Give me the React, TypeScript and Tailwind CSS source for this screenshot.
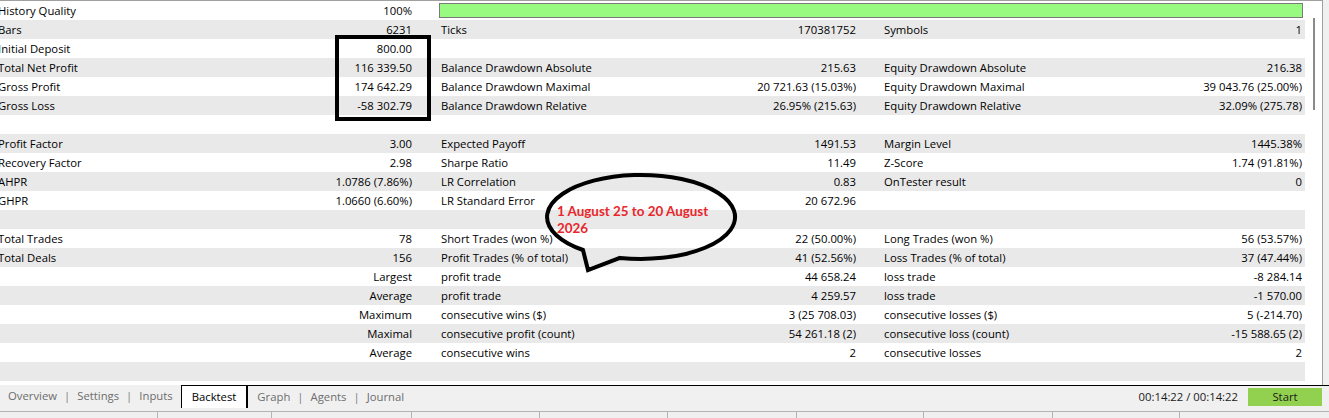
import React from "react";

type Cell = [string, string];
type Row = { cells: [Cell, Cell, Cell] } | { quality: true } | { empty: true };

const E: Cell = ["", ""];

const ROWS: Row[] = [
  { quality: true },
  { cells: [["Bars", "6231"], ["Ticks", "170381752"], ["Symbols", "1"]] },
  { cells: [["Initial Deposit", "800.00"], E, E] },
  { cells: [["Total Net Profit", "116 339.50"], ["Balance Drawdown Absolute", "215.63"], ["Equity Drawdown Absolute", "216.38"]] },
  { cells: [["Gross Profit", "174 642.29"], ["Balance Drawdown Maximal", "20 721.63 (15.03%)"], ["Equity Drawdown Maximal", "39 043.76 (25.00%)"]] },
  { cells: [["Gross Loss", "-58 302.79"], ["Balance Drawdown Relative", "26.95% (215.63)"], ["Equity Drawdown Relative", "32.09% (275.78)"]] },
  { empty: true },
  { cells: [["Profit Factor", "3.00"], ["Expected Payoff", "1491.53"], ["Margin Level", "1445.38%"]] },
  { cells: [["Recovery Factor", "2.98"], ["Sharpe Ratio", "11.49"], ["Z-Score", "1.74 (91.81%)"]] },
  { cells: [["AHPR", "1.0786 (7.86%)"], ["LR Correlation", "0.83"], ["OnTester result", "0"]] },
  { cells: [["GHPR", "1.0660 (6.60%)"], ["LR Standard Error", "20 672.96"], E] },
  { empty: true },
  { cells: [["Total Trades", "78"], ["Short Trades (won %)", "22 (50.00%)"], ["Long Trades (won %)", "56 (53.57%)"]] },
  { cells: [["Total Deals", "156"], ["Profit Trades (% of total)", "41 (52.56%)"], ["Loss Trades (% of total)", "37 (47.44%)"]] },
  { cells: [["", "Largest"], ["profit trade", "44 658.24"], ["loss trade", "-8 284.14"]] },
  { cells: [["", "Average"], ["profit trade", "4 259.57"], ["loss trade", "-1 570.00"]] },
  { cells: [["", "Maximum"], ["consecutive wins ($)", "3 (25 708.03)"], ["consecutive losses ($)", "5 (-214.70)"]] },
  { cells: [["", "Maximal"], ["consecutive profit (count)", "54 261.18 (2)"], ["consecutive loss (count)", "-15 588.65 (2)"]] },
  { cells: [["", "Average"], ["consecutive wins", "2"], ["consecutive losses", "2"]] },
  { empty: true },
];

const TABS = ["Overview", "Settings", "Inputs", "Backtest", "Graph", "Agents", "Journal"];
const STATUS_DIVIDERS = [158, 272, 412, 540, 668, 797, 924, 1053, 1180];

function StatCell({ cell, pad, first }: { cell: Cell; pad: string; first?: boolean }) {
  return (
    <div className={`flex items-center justify-between pt-[1px] ${pad}`}>
      <span className={first ? "-ml-[2px] whitespace-nowrap" : "whitespace-nowrap"}>{cell[0]}</span>
      <span className="whitespace-nowrap">{cell[1]}</span>
    </div>
  );
}

function StatRow({ row, index }: { row: Row; index: number }) {
  const bg = index % 2 === 1 ? "bg-[#e9e9e9]" : "bg-white";
  if ("quality" in row) {
    return (
      <div className={`grid h-[19px] grid-cols-[441px_1fr] ${bg}`}>
        <StatCell cell={["History Quality", "100%"]} pad="pr-[29px]" first />
        <div className="flex items-center">
          <div className="-ml-[2px] h-[15px] w-full border border-[#7a7a7a] bg-[#98fa80]" />
        </div>
      </div>
    );
  }
  if ("empty" in row) return <div className={`h-[19px] ${bg}`} />;
  return (
    <div className={`grid h-[19px] grid-cols-[441px_443px_1fr] ${bg}`}>
      <StatCell cell={row.cells[0]} pad="pr-[29px]" first />
      <StatCell cell={row.cells[1]} pad="pr-[28px]" />
      <StatCell cell={row.cells[2]} pad="pr-[3px]" />
    </div>
  );
}

function SpeechBubble() {
  return (
    <div className="absolute left-[540px] top-[170px] h-[105px] w-[210px]">
      <svg width="210" height="105" viewBox="0 0 210 105" className="absolute inset-0">
        <path
          d="M43 80 A94 42 0 1 1 80 87.9 L48 100 Z"
          fill="none"
          stroke="#000"
          strokeWidth="4"
          strokeLinejoin="miter"
        />
      </svg>
      <p className="absolute left-[17px] top-[33px] font-['Lato',sans-serif] text-[13.4px] font-bold leading-[17px] text-[#e8262b]">
        1 August 25 to 20 August
        <br />
        2026
      </p>
    </div>
  );
}

function TabLabel({ label, first }: { label: string; first?: boolean }) {
  return (
    <div className="flex items-center">
      {!first && <span className="mx-[7px] text-[#7a7a7a]">|</span>}
      <span>{label}</span>
    </div>
  );
}

export default function App() {
  return (
    <div className="relative flex h-[418px] w-[1329px] flex-col overflow-hidden bg-white font-['Open_Sans',sans-serif] text-[11.3px] text-black">
      <div className="flex h-[385px]">
        <div className="w-[1305px] border-t border-[#a0a0a0]">
          {ROWS.map((row, i) => (
            <StatRow key={i} row={row} index={i} />
          ))}
        </div>
        <div className="flex w-[17px] justify-center border-t border-[#a0a0a0] pt-[17px]">
          <div className="h-[92px] w-[2px] bg-[#8a8a8a]" />
        </div>
        <div className="flex-1 border-l border-[#a0a0a0] bg-[#f0f0f0]" />
      </div>

      {/* tab strip with run timer */}
      <div className="flex h-[26px] bg-[#f0f0f0]">
        <div className="flex h-[23px] items-center pl-[8px] pr-[8px] text-[#6d6d6d]">
          {TABS.slice(0, 3).map((t, i) => (
            <TabLabel key={t} label={t} first={i === 0} />
          ))}
        </div>
        <div className="flex h-[23px] items-center border-x border-t border-black bg-white px-[10px] shadow-[1px_0_0_#000]">
          Backtest
        </div>
        <div className="flex flex-1 items-start border-t border-black text-[#6d6d6d]">
          <div className="flex h-[22px] items-center pl-[10px]">
            {TABS.slice(4).map((t, i) => (
              <TabLabel key={t} label={t} first={i === 0} />
            ))}
          </div>
          <div className="flex flex-1 items-center justify-end pt-[2px] pr-[7px]">
            <span className="mr-[10px] text-[#1a1a1a]">00:14:22 / 00:14:22</span>
            <button className="flex h-[18px] w-[74px] items-center justify-center bg-[#92d050] text-[#1a1a1a]">
              Start
            </button>
          </div>
        </div>
      </div>

      <div className="flex flex-1 border-t border-[#b4b4b4] bg-[#f0f0f0]">
        {STATUS_DIVIDERS.map((x, i) => (
          <div
            key={x}
            className="h-full border-r border-[#b4b4b4]"
            style={{ width: x - (i > 0 ? STATUS_DIVIDERS[i - 1] : 0) }}
          />
        ))}
      </div>

      {/* annotations */}
      <div className="absolute left-[335px] top-[35px] h-[86px] w-[96px] border-4 border-black" />
      <SpeechBubble />
    </div>
  );
}
